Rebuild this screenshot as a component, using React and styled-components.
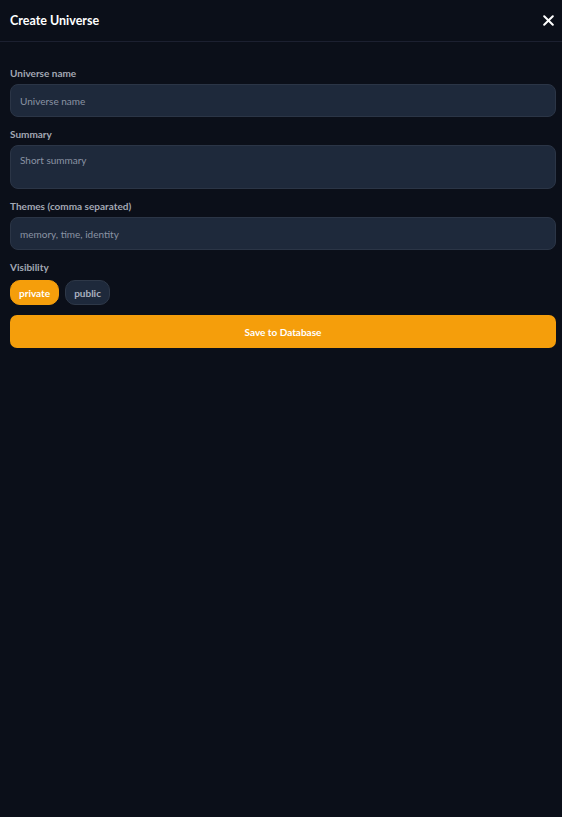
import React, { useState } from "react";
import styled, { createGlobalStyle } from "styled-components";

const GlobalStyle = createGlobalStyle`
  html, body {
    margin: 0;
    padding: 0;
    background: #0b0f19;
  }
  body {
    font-family: Lato, "Noto Sans", sans-serif;
  }
  * {
    box-sizing: border-box;
  }
`;

const Page = styled.div`
  min-height: 100vh;
  background: #0b0f19;
  color: #e5e7eb;
`;

const Header = styled.div`
  display: flex;
  align-items: center;
  justify-content: space-between;
  height: 42px;
  padding: 0 8px 0 10px;
  border-bottom: 1px solid #1c2030;
`;

const Title = styled.h2`
  margin: 0;
  font-size: 12.5px;
  font-weight: 700;
  color: #ffffff;
`;

const CloseButton = styled.button`
  display: flex;
  align-items: center;
  justify-content: center;
  width: 12px;
  height: 12px;
  padding: 0;
  border: 0;
  background: transparent;
  cursor: pointer;
`;

const Form = styled.div`
  display: flex;
  flex-direction: column;
  gap: 10px;
  padding: 24px 6px 0 10px;
`;

const Field = styled.div`
  display: flex;
  flex-direction: column;
  gap: 4px;
`;

const Label = styled.label`
  font-size: 10px;
  line-height: 14px;
  font-weight: 700;
  color: #a3a8b4;
`;

const Input = styled.input`
  height: 33px;
  padding: 0 9px;
  border: 1px solid #2b3546;
  border-radius: 8px;
  background: #1e293b;
  color: #e5e7eb;
  font-family: inherit;
  font-size: 10px;
  outline: none;
  &::placeholder {
    color: #8a93a3;
  }
`;

const TextArea = styled.textarea`
  height: 44px;
  padding: 8px 9px;
  border: 1px solid #2b3546;
  border-radius: 8px;
  background: #1e293b;
  color: #e5e7eb;
  font-family: inherit;
  font-size: 10px;
  resize: none;
  outline: none;
  &::placeholder {
    color: #8a93a3;
  }
`;

const Pills = styled.div`
  display: flex;
  gap: 6px;
  padding-top: 2px;
`;

const Pill = styled.button`
  height: 25px;
  padding: 0 8px;
  border-radius: 10px;
  border: 1px solid ${(p) => (p.$active ? "#f59e0b" : "#2e3848")};
  background: ${(p) => (p.$active ? "#f59e0b" : "#1e293b")};
  color: ${(p) => (p.$active ? "#ffffff" : "#aab2c0")};
  font-family: inherit;
  font-size: 10px;
  font-weight: 700;
  cursor: pointer;
`;

const SaveButton = styled.button`
  height: 33px;
  border: 0;
  border-radius: 7px;
  background: #f59e0b;
  color: #ffffff;
  font-family: inherit;
  font-size: 10px;
  font-weight: 700;
  cursor: pointer;
`;

export default function App() {
  const [visibility, setVisibility] = useState("private");

  return (
    <>
      <GlobalStyle />
      <Page>
        <Header>
          <Title>Create Universe</Title>
          <CloseButton aria-label="Close">
            <svg width="11" height="11" viewBox="0 0 11 11">
              <path d="M1.2 1.2L9.8 9.8M9.8 1.2L1.2 9.8" stroke="#ffffff" strokeWidth="2" strokeLinecap="round" />
            </svg>
          </CloseButton>
        </Header>
        <Form>
          <Field>
            <Label>Universe name</Label>
            <Input placeholder="Universe name" />
          </Field>
          <Field>
            <Label>Summary</Label>
            <TextArea placeholder="Short summary" />
          </Field>
          <Field>
            <Label>Themes (comma separated)</Label>
            <Input placeholder="memory, time, identity" />
          </Field>
          <Field>
            <Label>Visibility</Label>
            <Pills>
              {["private", "public"].map((v) => (
                <Pill key={v} $active={visibility === v} onClick={() => setVisibility(v)}>
                  {v}
                </Pill>
              ))}
            </Pills>
          </Field>
          <SaveButton>Save to Database</SaveButton>
        </Form>
      </Page>
    </>
  );
}
